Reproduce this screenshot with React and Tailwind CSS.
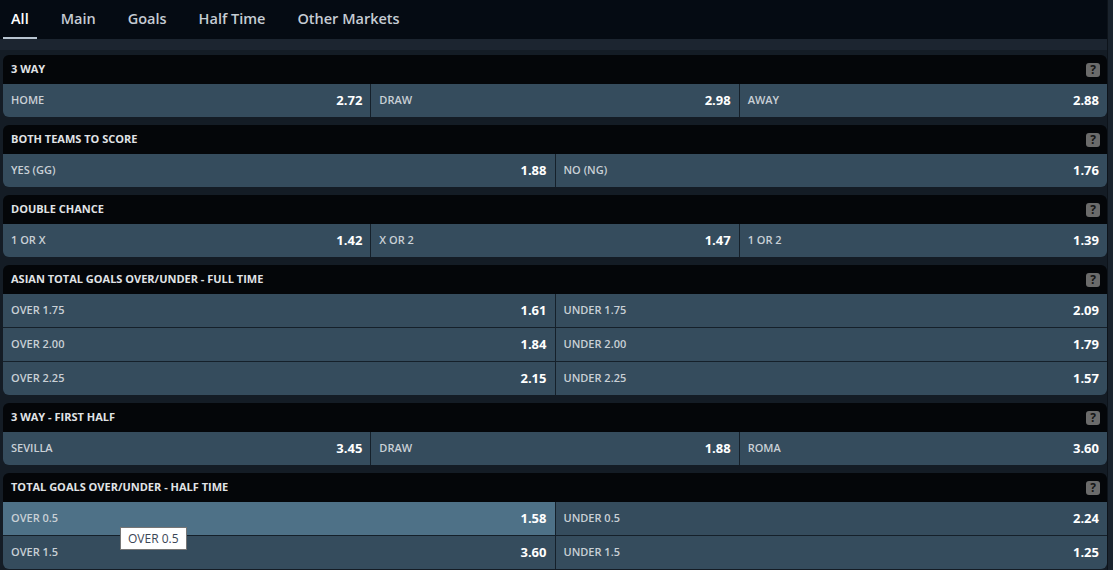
import React from 'react';

const markets = [
  {
    title: '3 WAY',
    cols: 3,
    rows: [[['HOME', '2.72'], ['DRAW', '2.98'], ['AWAY', '2.88']]],
  },
  {
    title: 'BOTH TEAMS TO SCORE',
    cols: 2,
    rows: [[['YES (GG)', '1.88'], ['NO (NG)', '1.76']]],
  },
  {
    title: 'DOUBLE CHANCE',
    cols: 3,
    rows: [[['1 OR X', '1.42'], ['X OR 2', '1.47'], ['1 OR 2', '1.39']]],
  },
  {
    title: 'ASIAN TOTAL GOALS OVER/UNDER - FULL TIME',
    cols: 2,
    rows: [
      [['OVER 1.75', '1.61'], ['UNDER 1.75', '2.09']],
      [['OVER 2.00', '1.84'], ['UNDER 2.00', '1.79']],
      [['OVER 2.25', '2.15'], ['UNDER 2.25', '1.57']],
    ],
  },
  {
    title: '3 WAY - FIRST HALF',
    cols: 3,
    rows: [[['SEVILLA', '3.45'], ['DRAW', '1.88'], ['ROMA', '3.60']]],
  },
  {
    title: 'TOTAL GOALS OVER/UNDER - HALF TIME',
    cols: 2,
    rows: [
      [['OVER 0.5', '1.58', true], ['UNDER 0.5', '2.24']],
      [['OVER 1.5', '3.60'], ['UNDER 1.5', '1.25']],
    ],
  },
];

const tabs = ['All', 'Main', 'Goals', 'Half Time', 'Other Markets'];

function Cell({ label, odd, active, last }) {
  return (
    <div
      className={`flex-1 flex items-center justify-between px-2 ${active ? 'bg-[#4e7187]' : 'bg-[#354c5d]'} ${last ? '' : 'border-r border-[#15202a]'}`}
    >
      <span className="text-[11px] font-semibold text-[#c9d0d6]">{label}</span>
      <span className="text-[13px] font-bold text-white">{odd}</span>
    </div>
  );
}

function Market({ market }) {
  return (
    <div className="rounded-[6px] overflow-hidden">
      <div className="h-[29px] bg-[#040609] flex items-center justify-between pl-2 pr-[7px]">
        <span className="text-[11px] font-bold text-[#e0e3e6]">{market.title}</span>
        <span className="w-[14px] h-[14px] rounded-[3px] bg-[#6b6b6b] flex items-center justify-center text-[12px] font-bold text-[#161616] leading-none">
          ?
        </span>
      </div>
      {market.rows.map((row, i) => (
        <div
          key={i}
          className={`flex ${i > 0 ? 'border-t border-[#15202a] h-[34px]' : 'h-[33px]'}`}
        >
          {row.map((c, j) => (
            <Cell key={j} label={c[0]} odd={c[1]} active={c[2]} last={j === row.length - 1} />
          ))}
        </div>
      ))}
    </div>
  );
}

export default function App() {
  return (
    <div
      className="w-[1113px] h-[570px] overflow-hidden flex bg-[#141c25]"
      style={{ fontFamily: '"Open Sans", "Liberation Sans", sans-serif' }}
    >
      <div className="flex-1 flex flex-col">
        {/* Tabs */}
        <div className="h-[39px] shrink-0 bg-[#050b13] flex items-end gap-4 px-[3px]">
          {tabs.map((t, i) => (
            <div
              key={t}
              className={`h-full flex items-center px-2 text-[14.5px] font-semibold border-b-2 ${i === 0 ? 'text-white border-[#b8c4d0]' : 'text-[#c5ccd3] border-transparent'}`}
            >
              {t}
            </div>
          ))}
        </div>
        <div className="h-[11px] shrink-0 bg-[#1c2530]" />

        {/* Markets */}
        <div className="relative flex flex-col gap-2 pt-[5px] pl-[3px]">
          {markets.map((m) => (
            <Market key={m.title} market={m} />
          ))}

          {/* Tooltip */}
          <div className="absolute left-[120px] top-[477px] h-[23px] px-[7px] flex items-center bg-white border border-[#767676] text-[12px] text-[#3b4656]">
            OVER 0.5
          </div>
        </div>
      </div>
      <div className="w-[6px] bg-[#1a232d] border-l border-[#0d131a]" />
    </div>
  );
}
